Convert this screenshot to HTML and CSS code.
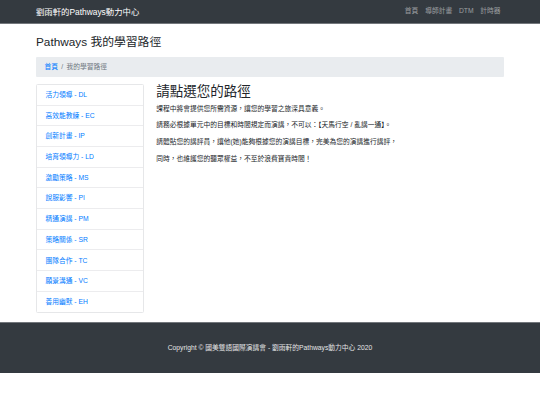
FILE: index.html
```html
<!DOCTYPE html>
<html lang="zh-Hant">

<head>
    <meta charset="UTF-8">
    <meta name="viewport" content="width=device-width, initial-scale=1.0">
    <title>我的學習路徑</title>
    <link rel="stylesheet" href="styles.css">
</head>

<body>
    <!--Navbar-------------------------------------------------------------------->
    <nav class="navbar">
        <div class="navbar-inner">
            <a class="brand" href="#">劉雨軒的Pathways動力中心</a>
            <ul class="nav-links">
                <li><a href="#">首頁</a></li>
                <li><a href="#">導師計畫</a></li>
                <li><a href="#">DTM</a></li>
                <li><a href="#">計時器</a></li>
            </ul>
        </div>
    </nav>

    <div class="container">
        <h1 class="page-title">Pathways 我的學習路徑</h1>

        <ol class="breadcrumb">
            <li><a href="#">首頁</a></li>
            <li class="active">我的學習路徑</li>
        </ol>

        <div class="row">
            <!--Sidebar paths------------------------------------------------------>
            <div class="sidebar">
                <div class="list-group">
                    <a class="list-item" href="#">活力領導 - DL</a>
                    <a class="list-item" href="#">高效能教練 - EC</a>
                    <a class="list-item" href="#">創新計畫 - IP</a>
                    <a class="list-item" href="#">培育領導力 - LD</a>
                    <a class="list-item" href="#">激勵策略 - MS</a>
                    <a class="list-item" href="#">說服影響 - PI</a>
                    <a class="list-item" href="#">精通演講 - PM</a>
                    <a class="list-item" href="#">策略關係 - SR</a>
                    <a class="list-item" href="#">團隊合作 - TC</a>
                    <a class="list-item" href="#">願景溝通 - VC</a>
                    <a class="list-item" href="#">善用幽默 - EH</a>
                </div>
            </div>
            <!--Main text---------------------------------------------------------->
            <div class="main">
                <h2>請點選您的路徑</h2>
                <p>課程中將會提供您所需資源，讓您的學習之旅深具意義。</p>
                <p>請務必根據單元中的目標和時間規定而演講，不可以：【天馬行空 / 亂講一通】。</p>
                <p>請體貼您的講評員，讓他(她)能夠根據您的演講目標，完美為您的演講進行講評，</p>
                <p>同時，也維護您的聽眾權益，不至於浪費寶貴時間！</p>
            </div>
        </div>
    </div>

    <footer class="footer">
        <p>Copyright © 國美雙語國際演講會 - 劉雨軒的Pathways動力中心 2020</p>
    </footer>
</body>

</html>
```

FILE: styles.css
```css
body {
    margin: 0;
    font-family: "Liberation Sans", "Noto Sans CJK TC", sans-serif;
    font-size: 6.75px;
    line-height: 10.125px;
    color: #212529;
    background-color: #fff;
}

a {
    color: #007bff;
    text-decoration: none;
}

/* navbar */
.navbar {
    background-color: #343a40;
    height: 23px;
    border-bottom: 1px solid #73777c;
}

.navbar-inner {
    width: 468px;
    height: 100%;
    margin: 0 auto;
    display: flex;
    justify-content: space-between;
    align-items: center;
}

.brand {
    color: #fff;
    font-size: 8.4px;
    line-height: 12px;
}

.nav-links {
    list-style: none;
    margin: 0;
    padding: 0;
    display: flex;
}

.nav-links a {
    display: block;
    padding: 0 3.4px;
    color: rgba(255, 255, 255, .5);
}

/* page */
.container {
    width: 468px;
    margin: 0 auto;
}

.page-title {
    margin: 11px 0 8px;
    font-size: 11.8px;
    line-height: 14px;
    font-weight: 400;
}

.breadcrumb {
    list-style: none;
    margin: 0 0 6.75px;
    padding: 5.06px 8.4px;
    background-color: #e9ecef;
    border-radius: 1px;
    display: flex;
}

.breadcrumb li {
    color: #6c757d;
}

.breadcrumb li + li::before {
    content: "/";
    padding: 0 3.4px;
    color: #6c757d;
}

.row {
    display: flex;
    gap: 12.6px;
    align-items: flex-start;
}

.sidebar {
    width: 107.6px;
    margin-bottom: 9px;
}

.list-group {
    border: 1px solid #e6e7e9;
    border-radius: 1.5px;
}

.list-item {
    display: block;
    padding: 5.06px 8.4px;
    line-height: 9.6px;
    border-top: 1px solid #ececee;
}

.list-item:first-child {
    border-top: none;
}

.main {
    flex: 1;
}

.main h2 {
    margin: 0 0 3.4px;
    font-size: 13.5px;
    line-height: 16.2px;
    font-weight: 400;
}

.main p {
    margin: 0 0 6.75px;
}

/* footer */
.footer {
    background-color: #343a40;
    border-top: 1px solid #73777c;
    padding: 20px 0;
    text-align: center;
    color: #e4e5e6;
}

.footer p {
    margin: 0;
    font-size: 6.75px;
}
```
